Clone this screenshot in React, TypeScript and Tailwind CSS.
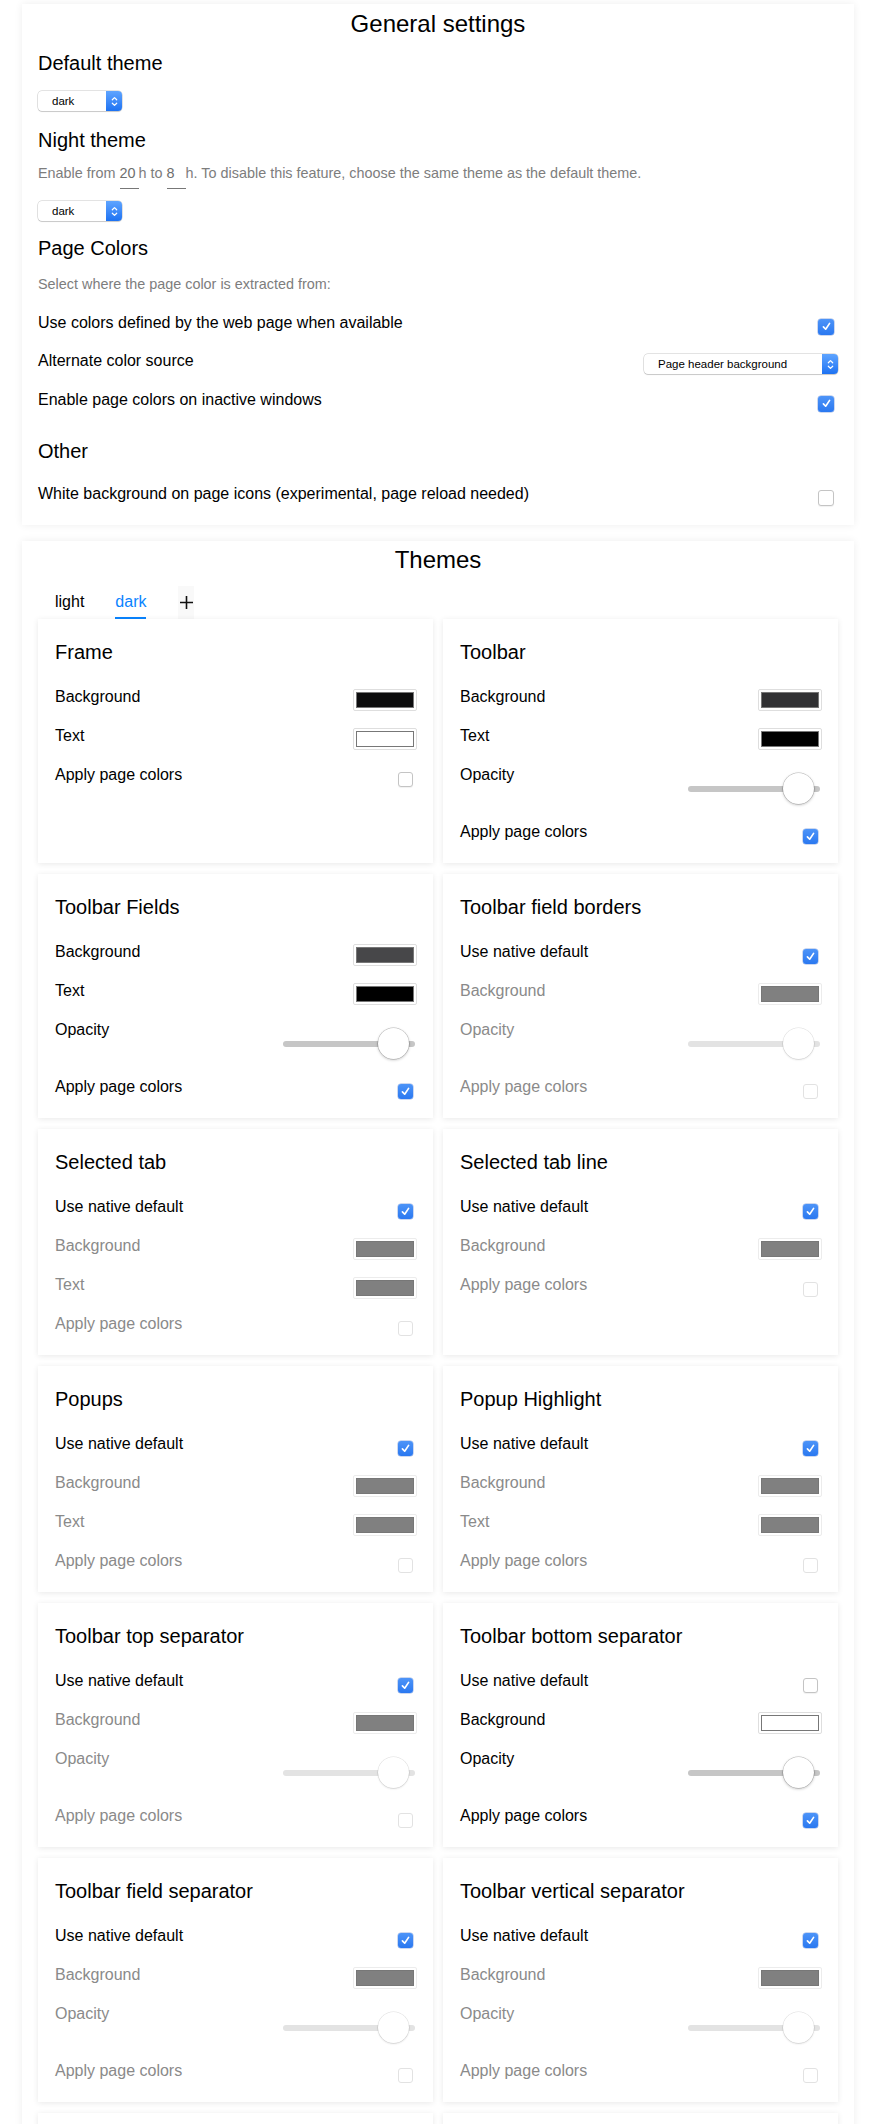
import React from "react";

type Row =
  | { kind: "color"; label: string; color: string; disabled?: boolean }
  | { kind: "check"; label: string; checked: boolean; disabled?: boolean }
  | { kind: "slider"; label: string; disabled?: boolean };

type Panel = { title: string; rows: Row[] };

const GRAY = "#808080";

const nativeGroup = (title: string, extra: "text" | "opacity" | "none"): Panel => {
  const rows: Row[] = [
    { kind: "check", label: "Use native default", checked: true },
    { kind: "color", label: "Background", color: GRAY, disabled: true },
  ];
  if (extra === "text") rows.push({ kind: "color", label: "Text", color: GRAY, disabled: true });
  if (extra === "opacity") rows.push({ kind: "slider", label: "Opacity", disabled: true });
  rows.push({ kind: "check", label: "Apply page colors", checked: false, disabled: true });
  return { title, rows };
};

const panels: Panel[] = [
  {
    title: "Frame",
    rows: [
      { kind: "color", label: "Background", color: "#0c0c0d" },
      { kind: "color", label: "Text", color: "#ffffff" },
      { kind: "check", label: "Apply page colors", checked: false },
    ],
  },
  {
    title: "Toolbar",
    rows: [
      { kind: "color", label: "Background", color: "#323234" },
      { kind: "color", label: "Text", color: "#000000" },
      { kind: "slider", label: "Opacity" },
      { kind: "check", label: "Apply page colors", checked: true },
    ],
  },
  {
    title: "Toolbar Fields",
    rows: [
      { kind: "color", label: "Background", color: "#474749" },
      { kind: "color", label: "Text", color: "#000000" },
      { kind: "slider", label: "Opacity" },
      { kind: "check", label: "Apply page colors", checked: true },
    ],
  },
  nativeGroup("Toolbar field borders", "opacity"),
  nativeGroup("Selected tab", "text"),
  nativeGroup("Selected tab line", "none"),
  nativeGroup("Popups", "text"),
  nativeGroup("Popup Highlight", "text"),
  nativeGroup("Toolbar top separator", "opacity"),
  {
    title: "Toolbar bottom separator",
    rows: [
      { kind: "check", label: "Use native default", checked: false },
      { kind: "color", label: "Background", color: "#ffffff" },
      { kind: "slider", label: "Opacity" },
      { kind: "check", label: "Apply page colors", checked: true },
    ],
  },
  nativeGroup("Toolbar field separator", "opacity"),
  nativeGroup("Toolbar vertical separator", "opacity"),
  nativeGroup("Sidebar", "text"),
  nativeGroup("Sidebar Highlight", "text"),
];

function Checkbox({ checked, disabled, size = 15 }: { checked: boolean; disabled?: boolean; size?: number }) {
  const dim = size === 16 ? "h-[16px] w-[16px]" : "h-[15px] w-[15px]";
  if (checked) {
    return (
      <span className={`${dim} flex flex-shrink-0 items-center justify-center rounded-[3px] bg-gradient-to-b from-[#4d94f8] to-[#2a78f0] shadow-[0_0_0_0.5px_rgba(0,60,180,0.4)]`}>
        <svg viewBox="0 0 16 16" className="h-[11px] w-[11px]" fill="none" stroke="#fff" strokeWidth="2.4" strokeLinecap="round" strokeLinejoin="round">
          <path d="M3.5 8.5 L6.8 12 L12.5 3.5" />
        </svg>
      </span>
    );
  }
  return (
    <span
      className={`${dim} block flex-shrink-0 rounded-[3px] bg-white ${
        disabled ? "border border-[#e2e2e2]" : "border border-[#c4c4c4] shadow-[0_1px_1px_rgba(0,0,0,0.06)]"
      }`}
    />
  );
}

function Select({ value, width }: { value: string; width: string }) {
  return (
    <div className={`${width} flex h-[20px] rounded-[4px] bg-white shadow-[0_0_0_0.5px_rgba(0,0,0,0.22),0_1px_1px_rgba(0,0,0,0.12)]`}>
      <span className="flex-1 pl-[14px] text-[11.5px] leading-[20px] text-black">{value}</span>
      <span className="flex w-[16px] items-center justify-center rounded-r-[4px] bg-gradient-to-b from-[#5ea4ff] to-[#1c72f2]">
        <svg viewBox="0 0 8 14" className="h-[13px] w-[7px]" fill="none" stroke="#fff" strokeWidth="1.4" strokeLinecap="round" strokeLinejoin="round">
          <path d="M1.5 5 L4 2.5 L6.5 5" />
          <path d="M1.5 9 L4 11.5 L6.5 9" />
        </svg>
      </span>
    </div>
  );
}

function Swatch({ color, disabled }: { color: string; disabled?: boolean }) {
  return (
    <span className={`mt-[1.5px] flex h-[22px] w-[64px] flex-shrink-0 rounded-[2px] border bg-white p-[2px] ${disabled ? "border-[#ececec]" : "border-[#dedede]"}`}>
      <span className="flex-1 border border-[#777]" style={{ backgroundColor: color }} />
    </span>
  );
}

function Slider({ disabled }: { disabled?: boolean }) {
  return (
    <div className="relative mr-[2px] mt-[8px] h-[31px] w-[132px] flex-shrink-0">
      <div className={`absolute left-0 right-0 top-[13px] h-[6px] rounded-full ${disabled ? "bg-[#e3e3e3]" : "bg-[#c6c6c6]"}`} />
      <div
        className={`absolute left-[95px] top-0 h-[31px] w-[31px] rounded-full bg-white ${
          disabled
            ? "shadow-[0_0_0_0.5px_rgba(0,0,0,0.12),0_1px_2px_rgba(0,0,0,0.12)]"
            : "shadow-[0_0_0_0.5px_rgba(0,0,0,0.25),0_1px_3px_rgba(0,0,0,0.25)]"
        }`}
      />
    </div>
  );
}

function PanelCard({ panel }: { panel: Panel }) {
  return (
    <div className="bg-white pb-[2px] pl-[17px] pr-[16px] pt-[21px] shadow-[0_1px_6px_rgba(0,0,0,0.09)]">
      <h3 className="text-[20px] leading-[24px] text-black">{panel.title}</h3>
      <div className="mt-[23px]">
        {panel.rows.map((row, i) => {
          const labelColor = row.disabled ? "text-[#8a8a8a]" : "text-black";
          return (
            <div key={i} className={`flex justify-between ${row.kind === "slider" ? "h-[57px]" : "h-[39px]"}`}>
              <span className={`text-[16px] leading-[20px] ${labelColor}`}>{row.label}</span>
              {row.kind === "color" && <Swatch color={row.color} disabled={row.disabled} />}
              {row.kind === "check" && (
                <span className="mr-[4px] mt-[6.5px] block">
                  <Checkbox checked={row.checked} disabled={row.disabled} />
                </span>
              )}
              {row.kind === "slider" && <Slider disabled={row.disabled} />}
            </div>
          );
        })}
      </div>
    </div>
  );
}

function SettingRow({ label, children, control }: { label: string; children?: React.ReactNode; control: "check" | "select" }) {
  return (
    <div className="flex h-[38.5px] justify-between">
      <span className="text-[16px] leading-[20px] text-black">{label}</span>
      <span className={control === "check" ? "mr-[4px] mt-[6px] block" : "mt-[3px] block"}>{children}</span>
    </div>
  );
}

function HourInput({ value }: { value: string }) {
  return (
    <span className="-mb-[7px] inline-block w-[19px] border-b border-[#777] pb-[6px] leading-[18px] text-[#6e6e6e]">{value}</span>
  );
}

export default function App() {
  return (
    <div className="min-h-screen bg-white pl-[22px] pr-[16px] pt-[4px] font-['Liberation_Sans',Arial,sans-serif] text-black">
      {/* general settings */}
      <section className="bg-white pb-[21.5px] pl-[16px] pr-[16px] pt-[6px] shadow-[0_0_8px_rgba(0,0,0,0.07)]">
        <h1 className="text-center text-[24px] leading-[28px]">General settings</h1>
        <h2 className="mt-[13px] text-[20px] leading-[24px]">Default theme</h2>
        <div className="mt-[16px]">
          <Select value="dark" width="w-[84px]" />
        </div>
        <h2 className="mt-[17px] text-[20px] leading-[24px]">Night theme</h2>
        <p className="mt-[12px] text-[14.4px] leading-[18px] text-[#7d7d7d]">
          Enable from <HourInput value="20" />h to <HourInput value="8" />h. To disable this feature, choose the same theme as the default theme.
        </p>
        <div className="mt-[19px]">
          <Select value="dark" width="w-[84px]" />
        </div>
        <h2 className="mt-[15px] text-[20px] leading-[24px]">Page Colors</h2>
        <p className="mt-[15px] text-[14.4px] leading-[18px] text-[#7d7d7d]">Select where the page color is extracted from:</p>
        <div className="mt-[19.5px]">
          <SettingRow label="Use colors defined by the web page when available" control="check">
            <Checkbox checked size={16} />
          </SettingRow>
          <SettingRow label="Alternate color source" control="select">
            <Select value="Page header background" width="w-[194px]" />
          </SettingRow>
          <SettingRow label="Enable page colors on inactive windows" control="check">
            <Checkbox checked size={16} />
          </SettingRow>
        </div>
        <h2 className="mt-[10.5px] text-[20px] leading-[24px]">Other</h2>
        <div className="mt-[21px] flex h-[20px] justify-between">
          <span className="text-[16px] leading-[20px]">White background on page icons (experimental, page reload needed)</span>
          <span className="mr-[4px] mt-[6.5px] block">
            <Checkbox checked={false} size={16} />
          </span>
        </div>
      </section>

      {/* themes */}
      <section className="mt-[16px] bg-white px-[16px] pb-[16px] pt-[5px] shadow-[0_0_8px_rgba(0,0,0,0.07)]">
        <h1 className="text-center text-[24px] leading-[28px]">Themes</h1>
        <div className="mt-[12px] flex h-[33px] items-start pl-[17px]">
          <span className="h-[33px] border-b-2 border-transparent pt-[5.5px] text-[16px] leading-[20px] text-black">light</span>
          <span className="ml-[31px] h-[33px] border-b-2 border-[#0a84ff] pt-[5.5px] text-[16px] leading-[20px] text-[#0a84ff]">dark</span>
          <span className="ml-[32px] flex h-[33px] w-[16px] items-center justify-center bg-[#f9f9f9]">
            <svg viewBox="0 0 13 13" className="h-[13px] w-[13px]" stroke="#111" strokeWidth="1.6">
              <path d="M6.5 0 V13 M0 6.5 H13" />
            </svg>
          </span>
        </div>
        <div className="grid grid-cols-2 gap-x-[10px] gap-y-[11px]">
          {panels.map((p) => (
            <PanelCard key={p.title} panel={p} />
          ))}
        </div>
      </section>
    </div>
  );
}
